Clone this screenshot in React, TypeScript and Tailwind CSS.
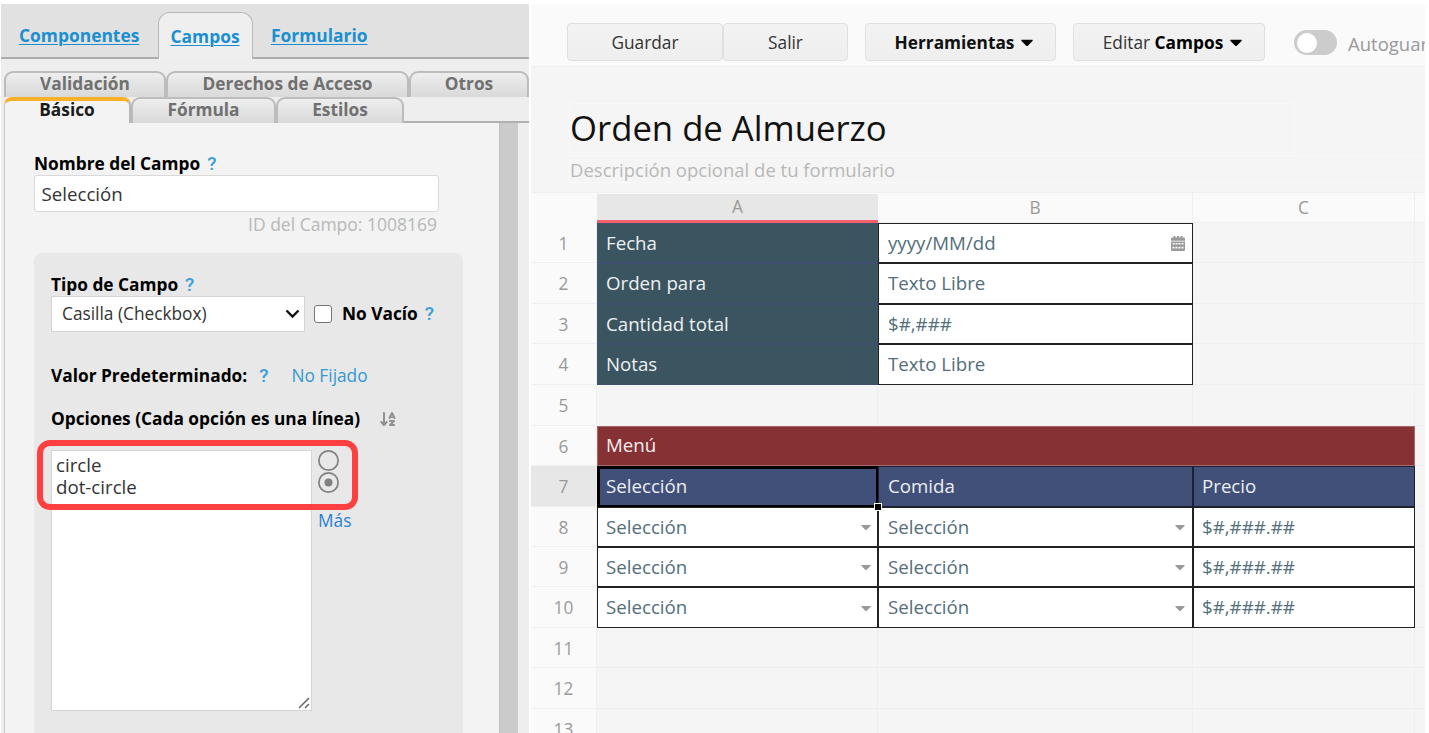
import { useState } from "react";
import type { ReactNode } from "react";
import clsx from "clsx";
import { FaCaretDown } from "react-icons/fa";
import { FaArrowDownAZ } from "react-icons/fa6";

type Kind = "teal" | "input" | "menu" | "navy" | "blank";

interface Cell {
  text?: string;
  kind: Kind;
  icon?: "calendar" | "caret";
  selected?: boolean;
}

interface Row {
  n: number;
  height: string;
  cells: Cell[];
}

const blank: Cell = { kind: "blank" };
const SHORT = "h-[40px]";
const TALL = "h-[41px]";

const optionRow = (n: number, height: string): Row => ({
  n,
  height,
  cells: [
    { text: "Selección", kind: "input", icon: "caret" },
    { text: "Selección", kind: "input", icon: "caret" },
    { text: "$#,###.##", kind: "input" },
  ],
});

const rows: Row[] = [
  { n: 1, height: SHORT, cells: [{ text: "Fecha", kind: "teal" }, { text: "yyyy/MM/dd", kind: "input", icon: "calendar" }, blank] },
  { n: 2, height: TALL, cells: [{ text: "Orden para", kind: "teal" }, { text: "Texto Libre", kind: "input" }, blank] },
  { n: 3, height: SHORT, cells: [{ text: "Cantidad total", kind: "teal" }, { text: "$#,###", kind: "input" }, blank] },
  { n: 4, height: TALL, cells: [{ text: "Notas", kind: "teal" }, { text: "Texto Libre", kind: "input" }, blank] },
  { n: 5, height: TALL, cells: [blank, blank, blank] },
  { n: 6, height: SHORT, cells: [{ text: "Menú", kind: "menu" }] },
  {
    n: 7,
    height: TALL,
    cells: [
      { text: "Selección", kind: "navy", selected: true },
      { text: "Comida", kind: "navy" },
      { text: "Precio", kind: "navy" },
    ],
  },
  optionRow(8, SHORT),
  optionRow(9, SHORT),
  optionRow(10, TALL),
  { n: 11, height: SHORT, cells: [blank, blank, blank] },
  { n: 12, height: TALL, cells: [blank, blank, blank] },
  { n: 13, height: SHORT, cells: [blank, blank, blank] },
];

const kindStyles: Record<Kind, string> = {
  teal: "border border-[#414f70] bg-[#3a5460] text-[#eef1f2]",
  input: "border border-[#222] bg-white text-[#546e7a]",
  menu: "col-span-3 border border-[#a8686a] bg-[#863134] pb-[2px] text-[#f6eeee]",
  navy: "border border-[#1b2133] bg-[#415078] text-[#eceef3]",
  blank: "border-r border-b border-[#efefef] bg-[#f5f5f5]",
};

export default function App() {
  return (
    <div className="flex h-[733px] w-[1429px] overflow-hidden bg-white pt-[4px] pr-[4px] pl-px font-['Open_Sans','Noto_Sans',sans-serif] text-[17.3px] text-black">
      <SidePanel />
      <main className="ml-[2px] flex min-w-0 flex-1 flex-col overflow-hidden bg-[#f5f5f5]">
        <Toolbar />
        <FormHeader />
        <Sheet />
      </main>
    </div>
  );
}

function SidePanel() {
  return (
    <aside className="flex w-[528px] shrink-0 flex-col bg-[#eee]">
      <nav className="flex h-[55px] shrink-0 text-[17.4px] font-bold text-[#1b8fd0]">
        <MainTab className="w-[157px] pl-[18px]">Componentes</MainTab>
        <div className="flex w-[95px] bg-[#e1e1e1] pt-[8px]">
          <a className="flex w-full items-center rounded-t-[12px] border border-b-0 border-[#b8b8b8] bg-[#efefef] pt-px pl-[11.5px] underline decoration-1 underline-offset-2">
            Campos
          </a>
        </div>
        <MainTab className="flex-1 pl-[18px]">Formulario</MainTab>
      </nav>

      <div className="mt-[12px] flex h-[26px] shrink-0 pl-[3px] font-bold text-[#707070]">
        <SubTab className="w-[162px]">Validación</SubTab>
        <SubTab className="w-[243px]">Derechos de Acceso</SubTab>
        <SubTab className="w-[120px]">Otros</SubTab>
      </div>
      <div className="flex h-[26px] shrink-0 pl-[3px] font-bold text-[#707070]">
        <div className="flex w-[127px] items-center justify-center overflow-hidden rounded-t-[8px] border-t-4 border-r-2 border-l border-t-[#fbb029] border-r-[#b8b8b8] border-l-[#c8c8c8] bg-[#f3f3f3] pb-[4px] text-[#1a1a1a]">
          Básico
        </div>
        <SubTab className="w-[145px]">Fórmula</SubTab>
        <SubTab className="w-[128px]">Estilos</SubTab>
        <div className="flex-1 border-b-2 border-[#b0b0b0]" />
      </div>

      <div className="flex min-h-0 flex-1 pl-[3px]">
        <FieldSettings />
        <div className="w-[19px] border-l border-[#c2c2c2] bg-[#cbcbcb]" />
        <div className="w-[11px]" />
      </div>
    </aside>
  );
}

function MainTab({ className, children }: { className: string; children: ReactNode }) {
  return (
    <a className={clsx("flex items-center border-b-2 border-[#adadad] bg-[#e1e1e1] pt-[10px] underline decoration-1 underline-offset-2", className)}>
      {children}
    </a>
  );
}

function SubTab({ className, children }: { className: string; children: ReactNode }) {
  return (
    <div className={clsx("flex items-center justify-center rounded-t-[9px] border-2 border-b-0 border-[#bcbcbc] bg-linear-to-b from-[#eee] to-[#d9d9d9] pb-[2px]", className)}>
      {children}
    </div>
  );
}

function FieldSettings() {
  const [name, setName] = useState("Selección");
  const [notEmpty, setNotEmpty] = useState(false);

  return (
    <section className="flex w-[495px] flex-col border-l border-[#c8c8c8] bg-[#f3f3f3] pl-[29px]">
      <div className="mt-[29px] flex h-[23px] items-center font-bold">
        Nombre del Campo <Help />
      </div>
      <input
        value={name}
        onChange={(e) => setName(e.target.value)}
        className="h-[37px] w-[405px] shrink-0 rounded-[3px] border border-[#d9d9d9] bg-white px-[6.5px] text-[18.7px] text-[#333] outline-none"
      />
      <p className="h-[25px] w-[403px] text-right text-[17.5px] leading-[25px] text-[#b8b8b8]">ID del Campo: 1008169</p>

      <div className="mt-[16px] flex min-h-0 w-[429px] flex-1 flex-col rounded-t-[8px] bg-[#e8e8e8] pl-[17px]">
        <div className="mt-[20px] flex h-[23px] shrink-0 items-center font-bold">
          Tipo de Campo <Help />
        </div>
        <div className="flex h-[36px] shrink-0 items-center">
          <div className="flex h-full w-[254px] items-center justify-between border border-[#d4d4d4] bg-white pr-[4px] pl-[10px] text-[17.3px] text-[#333]">
            Casilla (Checkbox)
            <svg width="15" height="10" viewBox="0 0 15 10" fill="none" stroke="#111" strokeWidth="2.4">
              <path d="M1.5 1.5 7.5 7.5 13.5 1.5" />
            </svg>
          </div>
          <button
            onClick={() => setNotEmpty(!notEmpty)}
            className={clsx("mr-[10px] ml-[9px] size-[18px] rounded-[3px] border-[1.5px] border-[#767676]", notEmpty ? "bg-[#1b8fd0]" : "bg-white")}
          />
          <span className="font-bold">No Vacío</span>
          <Help />
        </div>
        <div className="mt-[32px] flex h-[24px] shrink-0 items-center">
          <span className="mr-[5px] font-bold">Valor Predeterminado:</span>
          <Help />
          <a className="ml-[23px] text-[#3498d2]">No Fijado</a>
        </div>
        <div className="mt-[19px] flex h-[24px] shrink-0 items-center">
          <span className="font-bold">Opciones (Cada opción es una línea)</span>
          <FaArrowDownAZ className="ml-[19px] size-[18px] text-[#909090]" />
        </div>

        <div className="relative mt-[19px] flex">
          <div className="flex h-[261px] w-[261px] shrink-0 flex-col justify-between border border-[#d4d4d4] bg-white text-[18.7px] leading-[22px] text-[#333]">
            <p className="pt-[3px] pl-[4px]">
              circle
              <br />
              dot-circle
            </p>
            <svg className="mr-px mb-px self-end" width="12" height="12" viewBox="0 0 12 12" stroke="#666" strokeWidth="1.5">
              <path d="M1 11 11 1M7 11l4-4" />
            </svg>
          </div>
          <div className="flex flex-col gap-px pl-[6px]">
            <RadioMark />
            <RadioMark dotted />
            <a className="mt-[15px] leading-[24px] text-[#2a80d4]">Más</a>
          </div>
          <div className="absolute -top-[10px] -left-[14px] h-[70px] w-[321px] rounded-[13px] border-[6px] border-[#ff4040]" />
        </div>
      </div>
    </section>
  );
}

function Help() {
  return <span className="ml-[7px] pb-px font-['Roboto'] text-[19px] leading-none font-medium text-[#3a9fd8]">?</span>;
}

function RadioMark({ dotted = false }: { dotted?: boolean }) {
  return (
    <svg width="21" height="21" viewBox="0 0 21 21" fill="none">
      <circle cx="10.5" cy="10.5" r="9.6" stroke="#808080" strokeWidth="1.7" />
      {dotted && <circle cx="10.5" cy="10.5" r="4" fill="#808080" />}
    </svg>
  );
}

function Toolbar() {
  const [autosave, setAutosave] = useState(false);

  return (
    <header className="flex h-[63px] shrink-0 border-b border-[#efefef] bg-[#fafafa] pt-[19px] pl-[36px] whitespace-nowrap">
      <ToolButton className="w-[156px]">Guardar</ToolButton>
      <ToolButton className="w-[125px]">Salir</ToolButton>
      <ToolButton className="ml-[17px] w-[191px] pl-[7px]">
        <b className="text-[#111]">Herramientas</b>
        <MenuCaret />
      </ToolButton>
      <ToolButton className="ml-[17px] w-[192px] pl-[7px]">
        <span>
          Editar <b className="text-black">Campos</b>
        </span>
        <MenuCaret />
      </ToolButton>
      <button
        onClick={() => setAutosave(!autosave)}
        className={clsx("mt-[7px] ml-[29px] flex h-[25px] w-[43px] shrink-0 items-center rounded-full bg-[#ccc] px-[2.5px]", autosave && "justify-end")}
      >
        <span className="size-[20px] rounded-full bg-white" />
      </button>
      <span className="ml-[11px] h-[40px] text-[18.5px] leading-[41px] text-[#999]">Autoguardado</span>
    </header>
  );
}

function ToolButton({ className, children }: { className: string; children: ReactNode }) {
  return (
    <button className={clsx("flex h-[38px] shrink-0 items-center justify-center rounded-[4px] border border-[#e0e0e0] bg-linear-to-b from-[#f3f3f3] to-[#eee] pt-px text-[#333]", className)}>
      {children}
    </button>
  );
}

function MenuCaret() {
  return (
    <svg className="mt-px ml-[7px]" width="12" height="8" viewBox="0 0 12 8" fill="#000">
      <path d="M1 .8h10c.7 0 1 .7.5 1.2L6.8 6.7c-.4.4-1.2.4-1.6 0L.5 2C0 1.500.3.8 1 .8Z" />
    </svg>
  );
}

function FormHeader() {
  return (
    <div className="flex h-[126px] shrink-0 flex-col border-b border-[#efefef] pt-[36px] pl-[38px]">
      <h1 className="h-[50px] w-[726px] border border-[#f8f8f8] text-[34.7px] leading-[48px] text-[#111]">Orden de Almuerzo</h1>
      <p className="mt-[2px] h-[28px] border border-r-0 border-[#f8f8f8] text-[18.5px] leading-[27px] text-[#b8b8b8]">
        Descripción opcional de tu formulario
      </p>
    </div>
  );
}

function Sheet() {
  return (
    <div className="text-[18.7px]">
      <div className="grid h-[30px] grid-cols-[66px_281px_315px_222px_10px] bg-[#fafafa] text-center text-[17.3px] leading-[29px] text-[#999]">
        <div />
        <div className="mt-px border-b-3 border-[#f4606c] bg-[#e7e7e7] leading-[26px]">A</div>
        <div className="border-r border-b border-[#efefef] pt-px leading-[28px]">B</div>
        <div className="border-r border-b border-[#efefef] pt-px leading-[28px]">C</div>
        <div className="border-b border-[#efefef]" />
      </div>
      {rows.map((row) => (
        <div key={row.n} className={clsx("grid grid-cols-[66px_281px_315px_222px_10px]", row.height)}>
          <div
            className={clsx(
              "flex items-center justify-center border-r border-b border-[#efefef] pt-[2px] text-[17.3px] text-[#999]",
              row.n === 7 ? "bg-[#e7e7e7]" : "bg-[#fafafa]",
            )}
          >
            {row.n}
          </div>
          {row.cells.map((cell, i) => (
            <SheetCell key={i} cell={cell} nudge={i === 1} />
          ))}
          <div className="border-b border-[#efefef]" />
        </div>
      ))}
    </div>
  );
}

function SheetCell({ cell, nudge }: { cell: Cell; nudge: boolean }) {
  return (
    <div className={clsx("relative flex items-center justify-between", nudge ? "pr-px pl-[9px]" : "pl-[8px]", kindStyles[cell.kind])}>
      {cell.text}
      {cell.icon === "calendar" && <CalendarIcon />}
      {cell.icon === "caret" && <FaCaretDown className="mr-[3px] h-[16px] w-[16px] text-[#999]" />}
      {cell.selected && (
        <>
          <div className="absolute -inset-px -right-[2px] -bottom-[2px] border-3 border-black" />
          <div className="absolute -right-[5px] -bottom-[5px] z-10 size-[8px] border border-white bg-black" />
        </>
      )}
    </div>
  );
}

function CalendarIcon() {
  return (
    <svg className="mr-[6px]" width="14" height="15" viewBox="0 0 14 15" fill="#999">
      <path d="M2.5 0h2v3h-2zM6 0h2v3H6zM9.5 0h2v3h-2z" />
      <rect y="1.5" width="14" height="13.5" rx="1.3" />
      <path d="M0 5.2h14" stroke="#fff" strokeWidth=".8" />
      <g fill="#fff">
        <path d="M1.5 7h2v1.6h-2zM4.500 7h2v1.600h-2zM7.500 7h2v1.600h-2zM10.500 7h2v1.600h-2z" />
        <path d="M1.5 10.800h2v1.600h-2zM4.500 10.800h2v1.600h-2zM7.500 10.800h2v1.600h-2zM10.500 10.800h2v1.600h-2z" />
      </g>
    </svg>
  );
}
